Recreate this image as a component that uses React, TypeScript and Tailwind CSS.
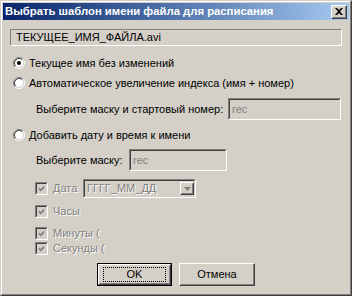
import React from 'react';

const Raised = ({ className = '', children }: { className?: string; children?: React.ReactNode }) => (
  <div className={`border border-t-white border-l-white border-r-[#404040] border-b-[#404040] bg-[#d4d0c8] ${className}`}>
    <div className="w-full h-full border border-t-[#d4d0c8] border-l-[#d4d0c8] border-r-[#808080] border-b-[#808080] flex items-center justify-center">
      {children}
    </div>
  </div>
);

const Sunken = ({ className = '', children }: { className?: string; children?: React.ReactNode }) => (
  <div className={`border border-t-[#808080] border-l-[#808080] border-r-white border-b-white ${className}`}>
    <div className="w-full h-full border border-t-[#404040] border-l-[#404040] border-r-[#d4d0c8] border-b-[#d4d0c8] flex items-center">
      {children}
    </div>
  </div>
);

const Radio = ({ checked = false }: { checked?: boolean }) => (
  <svg width="12" height="12" viewBox="0 0 12 12" className="shrink-0">
    <circle cx="6" cy="6" r="5" fill="#fff" />
    <path d="M2.11 9.89 A5.5 5.5 0 0 1 9.89 2.11" fill="none" stroke="#808080" />
    <path d="M9.89 2.11 A5.5 5.5 0 0 1 2.11 9.89" fill="none" stroke="#fff" />
    <path d="M2.82 9.18 A4.5 4.5 0 0 1 9.18 2.82" fill="none" stroke="#404040" />
    <path d="M9.18 2.82 A4.5 4.5 0 0 1 2.82 9.18" fill="none" stroke="#d4d0c8" />
    {checked && <circle cx="6" cy="6" r="2" fill="#000" />}
  </svg>
);

const Check = () => (
  <Sunken className="w-[13px] h-[13px] shrink-0">
    <svg width="9" height="9" viewBox="0 0 9 9" className="ml-px">
      <path d="M1 3 L3 5 L7 1 L7 4 L3 8 L1 6 Z" fill="#808080" />
    </svg>
  </Sunken>
);

const dim = 'text-[#808080] [text-shadow:1px_1px_0_#fff]';

export default function App() {
  return (
    <div className="w-[352px] h-[296px] border border-t-[#d4d0c8] border-l-[#d4d0c8] border-r-[#404040] border-b-[#404040] bg-[#d4d0c8] font-['Liberation_Sans',sans-serif] text-[11px] text-black">
      <div className="h-full border border-t-white border-l-white border-r-[#808080] border-b-[#808080] p-px flex flex-col">
        <div className="h-[17px] flex items-center justify-between pl-[2px] pr-[2px] bg-linear-to-r from-[#0a246a] to-[#a6caf0]">
          <span className="text-white font-bold text-[11.3px] leading-none">Выбрать шаблон имени файла для расписания</span>
          <Raised className="w-[16px] h-[14px]">
            <svg width="8" height="7" viewBox="0 0 8 7">
              <path d="M0 0h2l2 2 2-2h2L5 3.5 8 7H6L4 5 2 7H0l3-3.5z" fill="#000" />
            </svg>
          </Raised>
        </div>

        <div className="pl-[7px] flex flex-col">
          <div className="mt-[9px] w-[332px] h-[17px] border border-t-[#808080] border-l-[#808080] border-r-white border-b-white flex items-center pl-[5px]">
            ТЕКУЩЕЕ_ИМЯ_ФАЙЛА.avi
          </div>

          <div className="mt-[9px] h-[16px] flex items-center pl-[3px]">
            <Radio checked />
            <span className="ml-[4px]">Текущее имя без изменений</span>
          </div>
          <div className="mt-[4px] h-[16px] flex items-center pl-[3px]">
            <Radio />
            <span className="ml-[4px]">Автоматическое увеличение индекса (имя + номер)</span>
          </div>

          <div className="mt-[7px] flex items-center">
            <span className="w-[218px] pl-[26px] whitespace-nowrap">Выберите маску и стартовый номер:</span>
            <Sunken className="w-[113px] h-[22px]">
              <span className="pl-[2px] text-[#808080]">rec</span>
            </Sunken>
          </div>

          <div className="mt-[7px] h-[16px] flex items-center pl-[3px]">
            <Radio />
            <span className="ml-[4px]">Добавить дату и время к имени</span>
          </div>

          <div className="mt-[6px] flex items-center">
            <span className="w-[119px] pl-[26px] whitespace-nowrap">Выберите маску:</span>
            <Sunken className="w-[98px] h-[22px]">
              <span className="pl-[2px] text-[#808080]">rec</span>
            </Sunken>
          </div>

          <div className="mt-[8px] h-[19px] flex items-center pl-[25px]">
            <Check />
            <span className={`ml-[5px] w-[30px] ${dim}`}>Дата</span>
            <Sunken className="w-[113px] h-[19px]">
              <span className={`flex-1 pl-[2px] ${dim}`}>ГГГГ_ММ_ДД</span>
              <Raised className="w-[14px] h-[13px]">
                <svg width="7" height="4" viewBox="0 0 7 4">
                  <path d="M0 0h7L3.5 4z" fill="#808080" />
                </svg>
              </Raised>
            </Sunken>
          </div>

          <div className="mt-[7px] h-[13px] flex items-center pl-[25px]">
            <Check />
            <span className={`ml-[5px] ${dim}`}>Часы</span>
          </div>
          <div className="mt-[9px] h-[13px] flex items-center pl-[25px]">
            <Check />
            <span className={`ml-[5px] ${dim}`}>Минуты (</span>
          </div>
          <div className="mt-[2px] h-[13px] flex items-center pl-[25px]">
            <Check />
            <span className={`ml-[5px] ${dim}`}>Секунды (</span>
          </div>

          <div className="mt-[8px] flex pl-[87px]">
            <div className="w-[75px] h-[23px] border border-black">
              <Raised className="w-full h-full">
                <div className="w-[63px] h-[15px] border border-dotted border-black flex items-center justify-center">OK</div>
              </Raised>
            </div>
            <Raised className="ml-[7px] w-[76px] h-[23px]">Отмена</Raised>
          </div>
        </div>
      </div>
    </div>
  );
}
